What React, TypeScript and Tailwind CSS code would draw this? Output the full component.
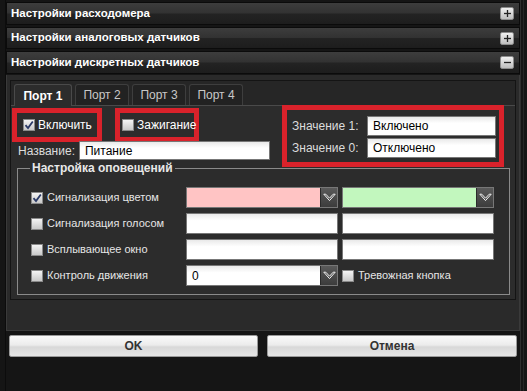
import React from "react";

const Check = ({ checked }: { checked?: boolean }) => (
  <span className="w-[12px] h-[12px] shrink-0 border border-[#8a8a8a] bg-[linear-gradient(to_bottom,#f4f4f4,#c9c9c9)] flex items-center justify-center">
    {checked && (
      <svg width="10" height="10" viewBox="0 0 10 10">
        <path d="M1.5 5.2 L4 8 L8.8 1.5" fill="none" stroke="#2b3a67" strokeWidth="1.8" />
      </svg>
    )}
  </span>
);

const DropBtn = () => (
  <span className="w-[17px] h-full shrink-0 bg-[linear-gradient(to_bottom,#5a5a5a,#3c3c3c)] border-l border-[#2a2a2a] flex items-center justify-center">
    <svg width="13" height="9" viewBox="0 0 13 9">
      <path d="M0.8 1.2 L6.5 7.6 L12.2 1.2 L10.2 1.2 L6.5 5.2 L2.8 1.2 Z" fill="none" stroke="#f2f2f2" strokeWidth="1" strokeLinejoin="round" />
    </svg>
  </span>
);

const Input = ({ value, cls = "", drop, bg = "bg-[linear-gradient(to_bottom,#e9e9e9,#ffffff_35%)]" }: { value?: string; cls?: string; drop?: boolean; bg?: string }) => (
  <div className={`flex items-stretch border border-[#777] ${bg} ${cls}`}>
    <span className="flex-1 pl-[5px] text-[12px] text-black leading-none flex items-center">{value}</span>
    {drop && <DropBtn />}
  </div>
);

const Header = ({ title, open, h }: { title: string; open?: boolean; h: string }) => (
  <div className={`${h} flex items-center justify-between border border-[#0b0b0b] bg-[linear-gradient(to_bottom,#3d3d3d_0%,#323232_48%,#232323_52%,#1d1d1d_100%)]`}>
    <span className="pl-[4px] text-white font-bold text-[11.5px]">{title}</span>
    <span className="mr-[5px] w-[14px] h-[13px] rounded-[2px] border border-[#8c8c8c] bg-[linear-gradient(to_bottom,#f0f0f0,#bdbdbd)] flex items-center justify-center">
      <svg width="9" height="9" viewBox="0 0 9 9">
        <path d="M1 4.5 H8" stroke="#222" strokeWidth="1.3" />
        {!open && <path d="M4.5 1 V8" stroke="#222" strokeWidth="1.3" />}
      </svg>
    </span>
  </div>
);

const Tab = ({ label, active }: { label: string; active?: boolean }) => (
  <div
    className={`h-[21px] flex items-center justify-center rounded-t-[3px] border border-b-0 text-[12px] ${
      active
        ? "w-[58px] bg-[#2c2c2c] border-[#4a4a4a] text-white font-bold mb-[-1px] h-[22px]"
        : "w-[54px] bg-[#222] border-[#3e3e3e] text-[#c8c8c8]"
    }`}
  >
    {label}
  </div>
);

const Row = ({ label, checked, c1, c2 }: { label: string; checked?: boolean; c1: React.ReactNode; c2: React.ReactNode }) => (
  <div className="h-[21px] flex items-stretch">
    <div className="w-[168px] pl-[13px] flex items-center gap-[4px] text-[11px] text-[#e6e6e6] whitespace-nowrap">
      <Check checked={checked} />
      {label}
    </div>
    <div className="w-[152px]">{c1}</div>
    <div className="w-[152px] ml-[4px]">{c2}</div>
  </div>
);

export default function App() {
  return (
    <div className="w-[527px] h-[391px] bg-[#151515] flex overflow-hidden font-['Liberation_Sans',Arial,sans-serif]">
      <div className="w-[6px] border-r border-[#0c0c0c]" />
      <div className="w-[514px] flex flex-col pt-[2px] gap-[2px]">
        <Header title="Настройки расходомера" h="h-[23px]" />
        <Header title="Настройки аналоговых датчиков" h="h-[22px]" />
        <Header title="Настройки дискретных датчиков" h="h-[23px]" open />

        <div className="h-[256px] -mt-[1px] bg-[#2a2a2a] border border-t-0 border-[#3a3a3a] px-[3px] pt-[5px]">
          <div className="h-[220px] border border-[#141414] bg-[#2c2c2c] flex flex-col">
            <div className="h-[25px] shrink-0 flex items-end gap-[3px] pl-[3px] border-b border-[#4a4a4a] bg-[#262626]">
              <Tab label="Порт 1" active />
              <Tab label="Порт 2" />
              <Tab label="Порт 3" />
              <Tab label="Порт 4" />
            </div>

            <div className="flex">
              <div className="flex flex-col">
                <div className="flex pt-[2px]">
                  <div className="ml-[1px] w-[90px] h-[34px] border-[5px] border-[#d9222b] flex items-center pl-[6px] gap-[3px] text-[12px] text-white">
                    <Check checked />
                    Включить
                  </div>
                  <div className="ml-[13px] w-[84px] h-[34px] border-[5px] border-[#d9222b] flex items-center pl-[2px] gap-[3px] text-[12px] text-white">
                    <Check />
                    Зажигание
                  </div>
                </div>
                <div className="-mt-[1px] flex items-center pl-[7px] gap-[4px]">
                  <span className="text-[12px] text-[#dcdcdc]">Название:</span>
                  <Input value="Питание" cls="w-[191px] h-[19px]" />
                </div>
              </div>

              <div className="ml-auto mr-[11px] -mt-[1px] w-[222px] h-[62px] border-[5px] border-[#d9222b] pl-[5px] pr-[3px] pt-[6px] flex flex-col gap-[2px]">
                <div className="flex items-center justify-between">
                  <span className="text-[12px] text-[#dcdcdc]">Значение 1:</span>
                  <Input value="Включено" cls="w-[129px] h-[20px]" />
                </div>
                <div className="flex items-center justify-between">
                  <span className="text-[12px] text-[#dcdcdc]">Значение 0:</span>
                  <Input value="Отключено" cls="w-[129px] h-[20px]" />
                </div>
              </div>
            </div>

            <div className="ml-[6px] mr-[5px] mt-[1px] border border-[#8a8a8a] flex flex-col pb-[8px]">
              <span className="-mt-[8px] ml-[12px] self-start px-[2px] bg-[#2c2c2c] text-[12px] leading-[15px] font-bold text-[#e8e8e8]">
                Настройка оповещений
              </span>
              <div className="mt-[11px] flex flex-col gap-[5px]">
                <Row
                  label="Сигнализация цветом"
                  checked
                  c1={<Input drop cls="h-full" bg="bg-[#ffc4c4]" />}
                  c2={<Input drop cls="h-full" bg="bg-[#c2f7be]" />}
                />
                <Row label="Сигнализация голосом" c1={<Input cls="h-full" />} c2={<Input cls="h-full" />} />
                <Row label="Всплывающее окно" c1={<Input cls="h-full" />} c2={<Input cls="h-full" />} />
                <Row
                  label="Контроль движения"
                  c1={<Input value="0" drop cls="h-full" />}
                  c2={
                    <div className="h-full flex items-center gap-[4px] text-[11px] text-[#e6e6e6]">
                      <Check />
                      Тревожная кнопка
                    </div>
                  }
                />
              </div>
            </div>
          </div>
        </div>

        <div className="flex gap-[9px] px-[3px] mt-[2px]">
          <button className="w-[249px] h-[22px] rounded-[2px] border border-[#9a9a9a] bg-[linear-gradient(to_bottom,#fafafa_0%,#ececec_45%,#d8d8d8_55%,#e6e6e6_100%)] text-[12px] font-bold text-[#333]">
            OK
          </button>
          <button className="w-[250px] h-[22px] rounded-[2px] border border-[#9a9a9a] bg-[linear-gradient(to_bottom,#fafafa_0%,#ececec_45%,#d8d8d8_55%,#e6e6e6_100%)] text-[12px] font-bold text-[#333]">
            Отмена
          </button>
        </div>
      </div>
      <div className="w-[7px] border-l border-[#2e2e2e] flex">
        <div className="w-[3px] border-r border-[#262626]" />
      </div>
    </div>
  );
}
